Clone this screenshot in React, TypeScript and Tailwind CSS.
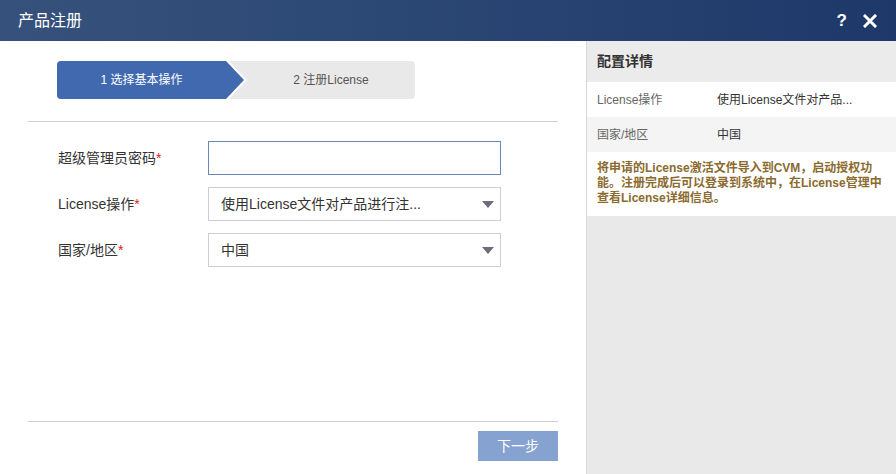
import { useState } from 'react';

const font = "font-['Liberation_Sans','Noto_Sans_CJK_SC',sans-serif]";

const Caret = () => (
  <svg width="12" height="7" viewBox="0 0 12 7" className="shrink-0">
    <path d="M0 0 L12 0 L6 7 Z" fill="#6b6f78" />
  </svg>
);

const Stepper = () => (
  <div className="ml-[29px] flex h-[38px] w-[358px] overflow-hidden rounded-[4px] bg-[#e9e9e9]">
    <div className="w-[190px] shrink-0 bg-white [clip-path:polygon(0_0,172px_0,190px_50%,172px_100%,0_100%)]">
      <div className="flex h-full w-[187px] items-center bg-[#4169b0] [clip-path:polygon(0_0,169px_0,187px_50%,169px_100%,0_100%)]">
        <span className="w-[169px] text-center text-[12px] text-white">1 选择基本操作</span>
      </div>
    </div>
    <div className="flex flex-1 items-center justify-center text-[12px] text-[#555]">2 注册License</div>
  </div>
);

type Row = { label: string; kind: 'input' | 'select'; value?: string };

const rows: Row[] = [
  { label: '超级管理员密码', kind: 'input' },
  { label: 'License操作', kind: 'select', value: '使用License文件对产品进行注...' },
  { label: '国家/地区', kind: 'select', value: '中国' },
];

export default function App() {
  const [password, setPassword] = useState('');

  return (
    <div className={`flex h-[474px] w-[896px] flex-col overflow-hidden bg-white ${font}`}>
      <div className="flex h-[41px] shrink-0 items-center bg-gradient-to-r from-[#36527c] to-[#1e3969] pl-[18px] pr-[19px]">
        <span className="text-[16px] text-white">产品注册</span>
        <div className="ml-auto flex items-center gap-[16px] text-white">
          <span className="text-[17px] font-bold">?</span>
          <svg width="14" height="14" viewBox="0 0 14 14">
            <path d="M2 2 L12 12 M12 2 L2 12" stroke="#fff" strokeWidth="3" strokeLinecap="square" />
          </svg>
        </div>
      </div>

      <div className="flex flex-1">
        <div className="flex w-[586px] shrink-0 flex-col px-[28px] pt-[20px]">
          <Stepper />
          <div className="mt-[22px] h-px bg-[#cfcdd9]" />

          <div className="mt-[19px] flex flex-col gap-[12px]">
            {rows.map((row) => (
              <div key={row.label} className="flex items-center">
                <div className="w-[180px] pl-[30px] text-[14px] text-[#333]">
                  {row.label}
                  <span className="text-[#e02020]">*</span>
                </div>
                {row.kind === 'input' ? (
                  <input
                    type="password"
                    value={password}
                    onChange={(e) => setPassword(e.target.value)}
                    className="h-[34px] w-[293px] border border-[#6a87b8] px-[12px] text-[14px] outline-none"
                  />
                ) : (
                  <div className="flex h-[34px] w-[293px] items-center border border-[#cfcdd9] pl-[12px] pr-[6px]">
                    <span className="flex-1 text-[14px] text-[#333]">{row.value}</span>
                    <Caret />
                  </div>
                )}
              </div>
            ))}
          </div>

          <div className="flex-1" />
          <div className="h-px bg-[#cfcdd9]" />
          <div className="flex h-[52px] justify-end pt-[9px]">
            <button className="h-[30px] w-[80px] bg-[#86a2d0] text-[14px] text-white">下一步</button>
          </div>
        </div>

        <div className="flex flex-1 flex-col border-l border-[#d5d8dd] bg-[#e9e9e9]">
          <div className="flex h-[41px] items-center bg-[#ebebeb] px-[10px] text-[14px] font-bold text-[#333]">配置详情</div>
          <div className="flex h-[35px] items-center bg-white px-[10px] text-[12px]">
            <span className="w-[120px] text-[#666]">License操作</span>
            <span className="text-[#333]">使用License文件对产品...</span>
          </div>
          <div className="flex h-[35px] items-center bg-[#f4f4f4] px-[10px] text-[12px]">
            <span className="w-[120px] text-[#666]">国家/地区</span>
            <span className="text-[#333]">中国</span>
          </div>
          <div className="bg-white px-[10px] pb-[10px] pt-[9px] text-[12px] font-bold leading-[15px] text-[#8b6a2e]">
            <div>将申请的License激活文件导入到CVM，启动授权功</div>
            <div>能。注册完成后可以登录到系统中，在License管理中</div>
            <div>查看License详细信息。</div>
          </div>
        </div>
      </div>
    </div>
  );
}
